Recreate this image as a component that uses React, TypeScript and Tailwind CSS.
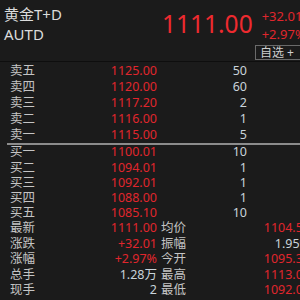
const font = "font-['Noto_Sans','Noto_Sans_CJK_SC',sans-serif]";

const asks = [
  { label: "卖五", price: "1125.00", vol: "50" },
  { label: "卖四", price: "1120.00", vol: "60" },
  { label: "卖三", price: "1117.20", vol: "2" },
  { label: "卖二", price: "1116.00", vol: "1" },
  { label: "卖一", price: "1115.00", vol: "5" },
];

const bids = [
  { label: "买一", price: "1100.01", vol: "10" },
  { label: "买二", price: "1094.01", vol: "1" },
  { label: "买三", price: "1092.01", vol: "1" },
  { label: "买四", price: "1088.00", vol: "1" },
  { label: "买五", price: "1085.10", vol: "10" },
];

const stats = [
  { l1: "最新", v1: "1111.00", r1: true, l2: "均价", v2: "1104.50", r2: true },
  { l1: "涨跌", v1: "+32.01", r1: true, l2: "振幅", v2: "1.95%", r2: false },
  { l1: "涨幅", v1: "+2.97%", r1: true, l2: "今开", v2: "1095.30", r2: true },
  { l1: "总手", v1: "1.28万", r1: false, l2: "最高", v2: "1113.00", r2: true },
  { l1: "现手", v1: "2", r1: false, l2: "最低", v2: "1092.00", r2: true },
];

function BookRow({ label, price, vol, h }: { label: string; price: string; vol: string; h: string }) {
  return (
    <div className={`flex items-center ${h} pl-[10px] text-[12.5px] leading-none`}>
      <span className="w-[40px] text-[#c4c4c4]">{label}</span>
      <span className="w-[107px] text-right text-[#e0262d]">{price}</span>
      <span className="w-[90px] text-right text-[#c9d3da]">{vol}</span>
    </div>
  );
}

export default function App() {
  return (
    <div className={`h-[300px] w-[300px] overflow-hidden bg-[#1b1b1b] ${font}`}>
      <div className="w-[320px]">
        {/* Header */}
        <div className="flex h-[62px] border-b border-[#0e0e0e]">
          <div className="w-[162px] pl-[4px] pt-[4px] text-[15px] leading-[20px] text-[#dcdcdc]">
            <div>黄金T+D</div>
            <div>AUTD</div>
          </div>
          <div className="flex flex-col">
            <div className="flex items-start">
              <span className="mt-[8px] text-[24.5px] leading-[32px] text-[#ee2a2f]">1111.00</span>
              <div className="ml-[9px] mt-[7px] flex flex-col text-[13px] leading-[18px] text-[#e0262d]">
                <span>+32.01</span>
                <span>+2.97%</span>
              </div>
            </div>
            <div className="ml-[93px] mt-[2px] flex h-[15px] w-[60px] items-center border border-[#6a6a6a] pl-[4px] text-[12px] leading-none text-[#cfcfcf]">
              自选 +
            </div>
          </div>
        </div>

        {/* Asks */}
        <div className="pt-px">
          {asks.map((r) => (
            <BookRow key={r.label} {...r} h="h-[16px]" />
          ))}
        </div>

        <div className="ml-[7px] h-[2px] bg-[#8c8c8c]" />

        {/* Bids */}
        <div>
          {bids.map((r) => (
            <BookRow key={r.label} {...r} h="h-[15.2px]" />
          ))}
        </div>

        {/* Stats */}
        <div>
          {stats.map((s) => (
            <div key={s.l1} className="flex h-[15.5px] items-center pl-[10px] text-[12.5px] leading-none">
              <span className="w-[40px] text-[#c4c4c4]">{s.l1}</span>
              <span className={`w-[107px] text-right ${s.r1 ? "text-[#e0262d]" : "text-[#c9d3da]"}`}>{s.v1}</span>
              <span className="ml-[4px] w-[40px] text-[#c4c4c4]">{s.l2}</span>
              <span className={`w-[109px] text-right ${s.r2 ? "text-[#e0262d]" : "text-[#c9d3da]"}`}>{s.v2}</span>
            </div>
          ))}
        </div>
      </div>
    </div>
  );
}
